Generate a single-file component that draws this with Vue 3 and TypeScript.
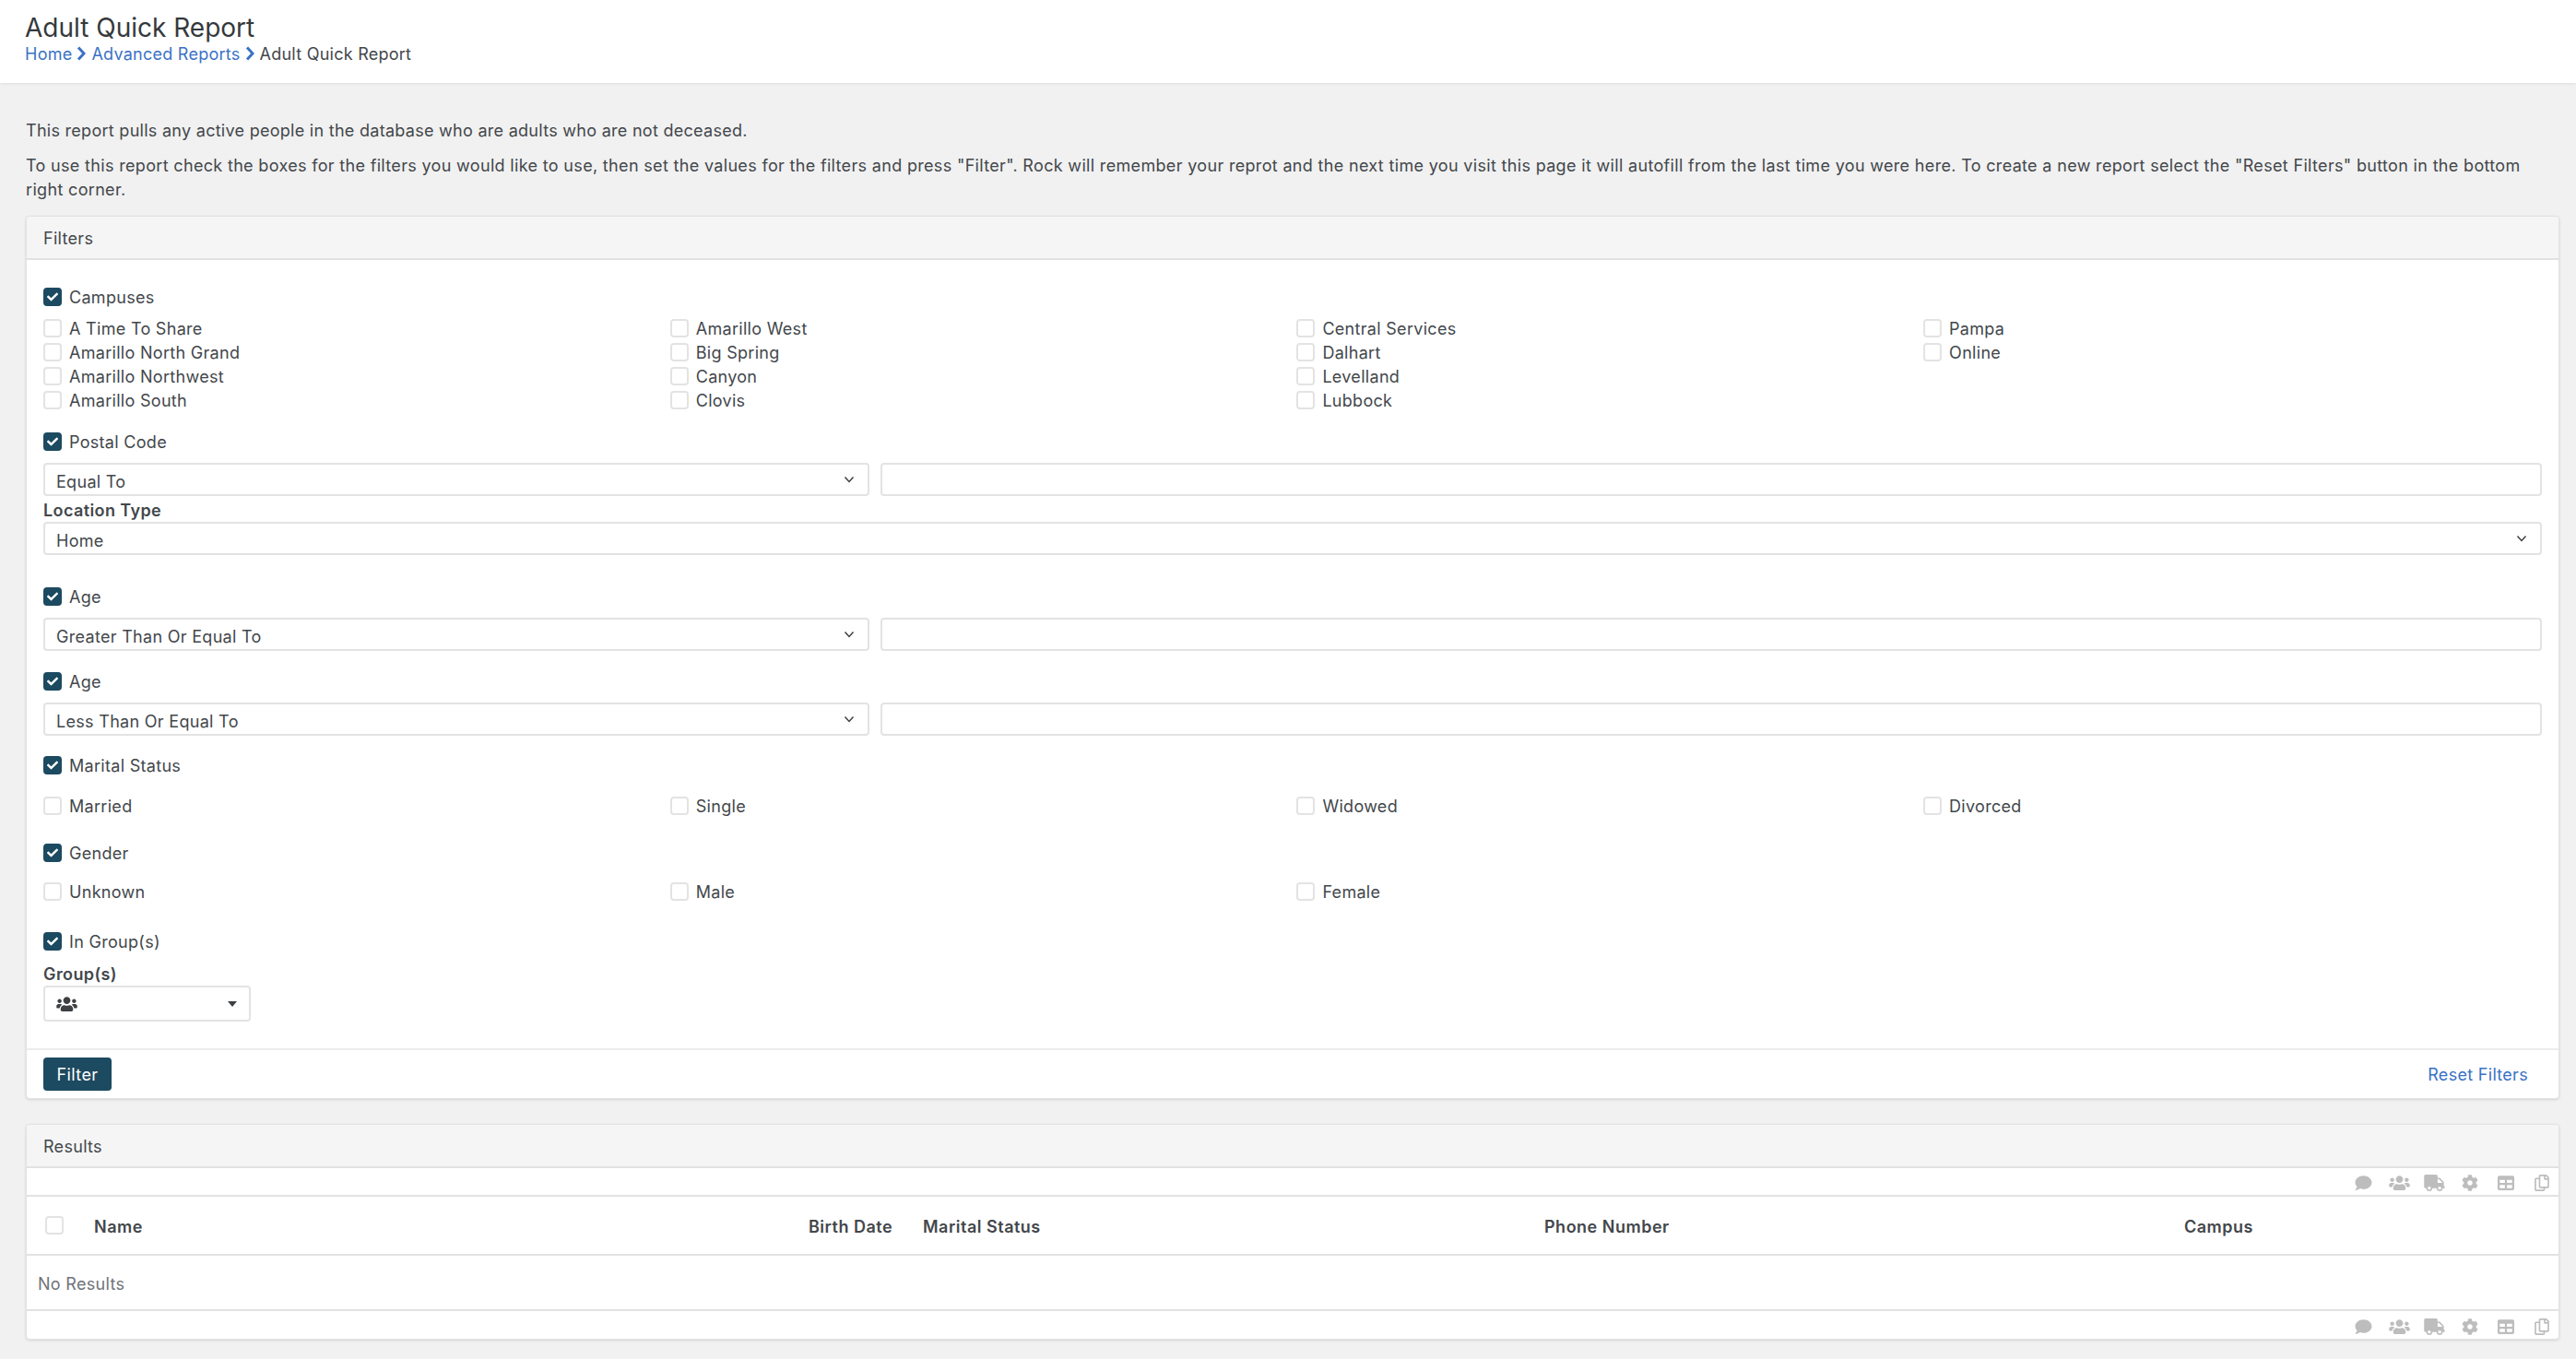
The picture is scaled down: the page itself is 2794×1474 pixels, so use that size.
<script setup lang="ts">
const campuses = [
  'A Time To Share', 'Amarillo West', 'Central Services', 'Pampa',
  'Amarillo North Grand', 'Big Spring', 'Dalhart', 'Online',
  'Amarillo Northwest', 'Canyon', 'Levelland', '',
  'Amarillo South', 'Clovis', 'Lubbock', '',
]
const marital = ['Married', 'Single', 'Widowed', 'Divorced']
const gender = ['Unknown', 'Male', 'Female']

const comment = 'M256 32C114.6 32 0 125.1 0 240c0 49.6 21.4 95 57 130.7C44.5 421.1 2.7 466 2.2 466.5c-2.2 2.3-2.8 5.7-1.5 8.7S4.8 480 8 480c66.3 0 116-31.8 140.6-51.4 32.7 12.3 69 19.4 107.4 19.4 141.4 0 256-93.1 256-208S397.4 32 256 32z'
const users = 'M96 224c35.3 0 64-28.7 64-64s-28.7-64-64-64-64 28.7-64 64 28.7 64 64 64zm448 0c35.3 0 64-28.7 64-64s-28.7-64-64-64-64 28.7-64 64 28.7 64 64 64zm32 32h-64c-17.6 0-33.5 7.1-45.1 18.6 40.3 22.1 68.9 62 75.1 109.4h66c17.7 0 32-14.3 32-32v-32c0-35.3-28.7-64-64-64zm-256 0c61.9 0 112-50.1 112-112S381.9 32 320 32 208 82.1 208 144s50.1 112 112 112zm76.8 32h-8.3c-20.8 10-43.9 16-68.5 16s-47.6-6-68.5-16h-8.3C179.6 288 128 339.6 128 403.2V432c0 26.5 21.5 48 48 48h288c26.5 0 48-21.5 48-48v-28.8c0-63.6-51.6-115.2-115.2-115.2zm-223.7-13.4C161.5 263.1 145.6 256 128 256H64c-35.3 0-64 28.7-64 64v32c0 17.7 14.3 32 32 32h65.9c6.3-47.4 34.9-87.3 75.2-109.4z'
const truck = 'M624 352h-16V243.9c0-12.7-5.1-24.9-14.1-33.9L494 110.1c-9-9-21.2-14.1-33.9-14.1H416V48c0-26.5-21.5-48-48-48H48C21.5 0 0 21.5 0 48v320c0 26.5 21.5 48 48 48h16c0 53 43 96 96 96s96-43 96-96h128c0 53 43 96 96 96s96-43 96-96h48c8.8 0 16-7.2 16-16v-32c0-8.8-7.2-16-16-16zM160 464c-26.5 0-48-21.5-48-48s21.5-48 48-48 48 21.5 48 48-21.5 48-48 48zm320 0c-26.5 0-48-21.5-48-48s21.5-48 48-48 48 21.5 48 48-21.5 48-48 48zm80-208H416V144h44.1l99.9 99.9V256z'
const cog = 'M487.4 315.7l-42.6-24.6c4.3-23.2 4.3-47 0-70.2l42.6-24.6c4.9-2.8 7.1-8.6 5.5-14-11.1-35.6-30-67.8-54.7-94.6-3.8-4.1-10-5.1-14.8-2.3L380.8 110c-17.9-15.4-38.5-27.3-60.8-35.1V25.8c0-5.6-3.9-10.5-9.4-11.7-36.7-8.2-74.3-7.8-109.2 0-5.5 1.2-9.4 6.1-9.4 11.7V75c-22.2 7.9-42.8 19.8-60.8 35.1L88.7 85.5c-4.9-2.8-11-1.9-14.8 2.3-24.7 26.7-43.6 58.9-54.7 94.6-1.7 5.4.6 11.2 5.5 14L67.3 221c-4.3 23.2-4.3 47 0 70.2l-42.6 24.6c-4.9 2.8-7.1 8.6-5.5 14 11.1 35.6 30 67.8 54.7 94.6 3.8 4.1 10 5.1 14.8 2.3l42.6-24.6c17.9 15.4 38.5 27.3 60.8 35.1v49.2c0 5.6 3.9 10.5 9.4 11.7 36.7 8.2 74.3 7.8 109.2 0 5.5-1.2 9.4-6.1 9.4-11.7v-49.2c22.2-7.9 42.8-19.8 60.8-35.1l42.6 24.6c4.9 2.8 11 1.9 14.8-2.3 24.7-26.7 43.6-58.9 54.7-94.6 1.5-5.5-.7-11.3-5.6-14.1zM256 336c-44.1 0-80-35.9-80-80s35.9-80 80-80 80 35.9 80 80-35.9 80-80 80z'
const table = 'M464 32H48C21.49 32 0 53.49 0 80v352c0 26.51 21.49 48 48 48h416c26.51 0 48-21.49 48-48V80c0-26.51-21.49-48-48-48zM224 416H64v-96h160v96zm0-160H64v-96h160v96zm224 160H288v-96h160v96zm0-160H288v-96h160v96z'
const copy = 'M433.941 65.941l-51.882-51.882A48 48 0 0 0 348.118 0H176c-26.51 0-48 21.49-48 48v48H48c-26.51 0-48 21.49-48 48v320c0 26.51 21.49 48 48 48h224c26.51 0 48-21.49 48-48v-48h80c26.51 0 48-21.49 48-48V99.882a48 48 0 0 0-14.059-33.941zM266 464H54a6 6 0 0 1-6-6V150a6 6 0 0 1 6-6h74v224c0 26.51 21.49 48 48 48h96v42a6 6 0 0 1-6 6zm128-96H182a6 6 0 0 1-6-6V54a6 6 0 0 1 6-6h106v88c0 13.255 10.745 24 24 24h88v202a6 6 0 0 1-6 6zm6-256h-64V48h9.632c1.591 0 3.117.632 4.243 1.757l48.368 48.368a6 6 0 0 1 1.757 4.243V112z'
const check = 'M173.898 439.404l-166.4-166.4c-9.997-9.997-9.997-26.206 0-36.204l36.203-36.204c9.997-10 26.207-10 36.204 0L192 312.69 432.095 72.596c9.997-9.997 26.207-9.997 36.204 0l36.203 36.204c9.997 9.997 9.997 26.206 0 36.204l-294.4 294.401c-9.998 9.997-26.207 9.997-36.204-.001z'

const tools = [
  { d: comment, vb: '0 0 512 512', cls: 't1' },
  { d: users, vb: '0 0 640 512', cls: 't2' },
  { d: truck, vb: '0 0 640 512', cls: 't3' },
  { d: cog, vb: '0 0 512 512', cls: 't4' },
  { d: table, vb: '0 0 512 512', cls: 't5' },
  { d: copy, vb: '0 0 448 512', cls: 't6' },
]
</script>

<template>
  <div class="page">
    <header class="top">
      <h1 class="title">Adult Quick Report</h1>
      <nav class="crumbs">
        <a class="link">Home</a>
        <svg class="sep" viewBox="0 0 10 16"><path d="M2 1.5 8 8l-6 6.5" /></svg>
        <a class="link">Advanced Reports</a>
        <svg class="sep" viewBox="0 0 10 16"><path d="M2 1.5 8 8l-6 6.5" /></svg>
        <span>Adult Quick Report</span>
      </nav>
    </header>

    <main class="main">
      <p class="intro first">This report pulls any active people in the database who are adults who are not deceased.</p>
      <p class="intro second">To use this report check the boxes for the filters you would like to use, then set the values for the filters and press "Filter". Rock will remember your reprot and the next time you visit this page it will autofill from the last time you were here. To create a new report select the "Reset Filters" button in the bottom right corner.</p>

      <section class="panel">
        <div class="panel-head">Filters</div>
        <div class="panel-body">
          <label class="check-row"><span class="box on"><svg viewBox="0 0 512 512"><path :d="check" /></svg></span>Campuses</label>
          <div class="grid4 campus">
            <label v-for="(c, i) in campuses" :key="i" class="check-row">
              <template v-if="c"><span class="box"></span>{{ c }}</template>
            </label>
          </div>

          <label class="check-row m19"><span class="box on"><svg viewBox="0 0 512 512"><path :d="check" /></svg></span>Postal Code</label>
          <div class="compare">
            <div class="select half">Equal To<svg class="chev" viewBox="0 0 12 8"><path d="M1.5 1.5 6 6.5l4.5-5" /></svg></div>
            <div class="field"></div>
          </div>
          <div class="bold-label location-label">Location Type</div>
          <div class="select wide">Home<svg class="chev" viewBox="0 0 12 8"><path d="M1.5 1.5 6 6.5l4.5-5" /></svg></div>

          <label class="check-row m32"><span class="box on"><svg viewBox="0 0 512 512"><path :d="check" /></svg></span>Age</label>
          <div class="compare">
            <div class="select half">Greater Than Or Equal To<svg class="chev" viewBox="0 0 12 8"><path d="M1.5 1.5 6 6.5l4.5-5" /></svg></div>
            <div class="field"></div>
          </div>

          <label class="check-row m20"><span class="box on"><svg viewBox="0 0 512 512"><path :d="check" /></svg></span>Age</label>
          <div class="compare">
            <div class="select half">Less Than Or Equal To<svg class="chev" viewBox="0 0 12 8"><path d="M1.5 1.5 6 6.5l4.5-5" /></svg></div>
            <div class="field"></div>
          </div>

          <label class="check-row m19"><span class="box on"><svg viewBox="0 0 512 512"><path :d="check" /></svg></span>Marital Status</label>
          <div class="grid4 m18">
            <label v-for="m in marital" :key="m" class="check-row"><span class="box"></span>{{ m }}</label>
          </div>

          <label class="check-row m25"><span class="box on"><svg viewBox="0 0 512 512"><path :d="check" /></svg></span>Gender</label>
          <div class="grid4 m16">
            <label v-for="g in gender" :key="g" class="check-row"><span class="box"></span>{{ g }}</label>
          </div>

          <label class="check-row m28"><span class="box on"><svg viewBox="0 0 512 512"><path :d="check" /></svg></span>In Group(s)</label>
          <div class="bold-label group-label">Group(s)</div>
          <div class="picker">
            <svg class="picker-icon" viewBox="0 0 640 512"><path :d="users" /></svg>
            <span class="caret"></span>
          </div>
        </div>
        <div class="panel-foot">
          <button class="btn" type="button">Filter</button>
          <a class="link reset">Reset Filters</a>
        </div>
      </section>

      <section class="panel results">
        <div class="panel-head">Results</div>
        <div class="toolbar">
          <svg v-for="t in tools" :key="t.cls" class="tool" :class="t.cls" :viewBox="t.vb"><path :d="t.d" /></svg>
        </div>
        <div class="thead">
          <span class="box head-box"></span>
          <span class="col c-name">Name</span>
          <span class="col c-birth">Birth Date</span>
          <span class="col c-marital">Marital Status</span>
          <span class="col c-phone">Phone Number</span>
          <span class="col c-campus">Campus</span>
        </div>
        <div class="empty">No Results</div>
        <div class="toolbar bottom">
          <svg v-for="t in tools" :key="t.cls" class="tool" :class="t.cls" :viewBox="t.vb"><path :d="t.d" /></svg>
        </div>
      </section>
    </main>
  </div>
</template>

<style>
html, body { margin: 0; background: #f1f1f1; }
</style>

<style scoped>
.page {
  width: 2794px;
  height: 1474px;
  overflow: hidden;
  background: #f1f1f1;
  color: #43474b;
  font-family: Inter, "Noto Sans", sans-serif;
  font-size: 18px;
  letter-spacing: 0.3px;
}
.top {
  height: 90px;
  box-sizing: border-box;
  padding: 14px 27px 0;
  background: #fff;
  box-shadow: 0 1px 3px rgba(0, 0, 0, .08);
}
.title {
  margin: 0;
  font-size: 28px;
  font-weight: 400;
  line-height: 32px;
  letter-spacing: 0;
  color: #35393c;
}
.crumbs {
  display: flex;
  align-items: center;
  height: 24px;
  font-size: 18px;
  letter-spacing: 0.25px;
}
.link { color: #3b72c4; }
.sep {
  width: 10px;
  height: 16px;
  margin: 0 6px 0 5px;
  fill: none;
  stroke: #3b72c4;
  stroke-width: 3;
}
.main { padding: 0 18px 0 28px; }
.intro {
  margin: 0;
  line-height: 26px;
  font-size: 18px;
}
.first { padding-top: 39px; letter-spacing: 0.28px; }
.second { margin-top: 12px; max-width: 2720px; letter-spacing: 0.33px; }
.panel {
  margin-top: 15px;
  background: #fff;
  border: 1px solid #e2e2e2;
  border-radius: 4px;
  box-shadow: 0 1px 3px rgba(0, 0, 0, .12);
}
.panel-head {
  box-sizing: border-box;
  height: 47px;
  padding-left: 18px;
  line-height: 47px;
  background: #f5f5f5;
  border-bottom: 2px solid #e2e2e2;
  border-radius: 4px 4px 0 0;
}
.panel-body { padding: 27px 18px 29px; }
.check-row {
  display: flex;
  align-items: center;
  box-sizing: border-box;
  height: 26px;
  padding-top: 1px;
}
.check-row .box { margin-top: -1px; }
.box {
  box-sizing: border-box;
  flex: none;
  display: flex;
  align-items: center;
  justify-content: center;
  width: 20px;
  height: 20px;
  margin-right: 8px;
  border: 2px solid #e3e3e3;
  border-radius: 4px;
  background: #fff;
}
.box.on {
  background: #1c4a60;
  border-color: #1c4a60;
}
.box svg { width: 12px; height: 12px; fill: #fff; }
.grid4 {
  display: grid;
  grid-template-columns: repeat(4, 679.7px);
}
.campus { margin-top: 8px; }
.m16 { margin-top: 16px; }
.m18 { margin-top: 18px; }
.m19 { margin-top: 19px; }
.m20 { margin-top: 20px; }
.m25 { margin-top: 25px; }
.m28 { margin-top: 28px; }
.m32 { margin-top: 32px; }
.compare {
  display: flex;
  gap: 12px;
  margin-top: 10px;
}
.select, .field {
  box-sizing: border-box;
  height: 36px;
  background: #fff;
  border: 2px solid #e3e3e3;
  border-radius: 4px;
}
.select {
  position: relative;
  padding-left: 12px;
  line-height: 37px;
  flex: none;
}
.half { width: 896px; }
.wide { width: 2710px; }
.field { width: 1802px; flex: none; }
.chev {
  position: absolute;
  top: 12px;
  right: 14px;
  width: 12px;
  height: 8px;
  fill: none;
  stroke: #3c4043;
  stroke-width: 1.5;
}
.bold-label {
  height: 26px;
  line-height: 28px;
  font-weight: 600;
  letter-spacing: 0.4px;
}
.location-label { margin-top: 2px; }
.group-label {
  margin-top: 11px;
  height: 24px;
  line-height: 24px;
}
.picker {
  box-sizing: border-box;
  position: relative;
  display: flex;
  align-items: center;
  width: 225px;
  height: 39px;
  padding-left: 12px;
  border: 2px solid #e3e3e3;
  border-radius: 4px;
}
.picker-icon { width: 23px; height: 18px; fill: #3c4043; }
.caret {
  position: absolute;
  right: 13px;
  top: 15px;
  border-left: 5.5px solid transparent;
  border-right: 5.5px solid transparent;
  border-top: 6px solid #3c4043;
}
.panel-foot {
  display: flex;
  justify-content: space-between;
  align-items: center;
  height: 54px;
  box-sizing: border-box;
  padding: 0 33px 0 18px;
  border-top: 2px solid #ececec;
}
.btn {
  width: 74px;
  height: 36px;
  padding: 0;
  border: 0;
  border-radius: 4px;
  background: #1c4a60;
  color: #fff;
  font: inherit;
  letter-spacing: 0.4px;
}
.results { margin-top: 27px; height: 234px; box-sizing: border-box; }
.toolbar {
  display: flex;
  justify-content: flex-end;
  align-items: center;
  box-sizing: border-box;
  height: 31px;
  padding: 3px 10px 0 0;
  border-bottom: 2px solid #e2e2e2;
}
.toolbar.bottom { border-bottom: 0; height: 30px; }
.tool { height: 18px; fill: #bdbdbd; }
.t1 { width: 19px; margin-right: 18px; }
.t2 { width: 23px; margin-right: 15px; }
.t3 { width: 23px; margin-right: 18px; }
.t4 { width: 18px; margin-right: 21px; }
.t5 { width: 18px; margin-right: 22px; }
.t6 { width: 16px; }
.thead {
  display: flex;
  align-items: center;
  box-sizing: border-box;
  height: 64px;
  padding-left: 20px;
  border-bottom: 2px solid #e2e2e2;
  font-weight: 600;
  letter-spacing: 0.5px;
}
.col { margin-top: 3px; }
.head-box { margin-right: 0; }
.c-name { margin-left: 33px; width: 775px; }
.c-birth { width: 124px; }
.c-marital { width: 674px; }
.c-phone { width: 694px; }
.empty {
  box-sizing: border-box;
  height: 60px;
  padding-left: 12px;
  line-height: 61px;
  border-bottom: 2px solid #e2e2e2;
  color: #6f7378;
}
.reset { font-size: 18px; }
</style>
